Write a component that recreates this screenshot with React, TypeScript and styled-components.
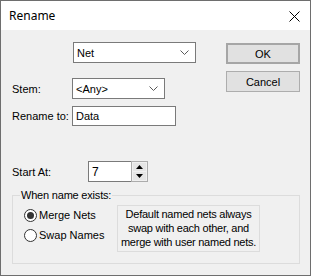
import React from "react";
import styled, { createGlobalStyle } from "styled-components";

const Global = createGlobalStyle`
  html, body { margin: 0; padding: 0; background: #ffffff; }
  * { box-sizing: border-box; }
`;

const Window = styled.div`
  width: 311px;
  height: 276px;
  border: 1px solid #6e6e6e;
  background: #f0f0f0;
  display: flex;
  flex-direction: column;
  font-family: "Liberation Sans", Arial, sans-serif;
  font-size: 11px;
  color: #000;
`;

const TitleBar = styled.div`
  height: 29px;
  background: #ffffff;
  display: flex;
  align-items: center;
  justify-content: space-between;
  padding: 0 10px 0 8px;
`;

const Title = styled.span`
  font-family: "Noto Sans", "Open Sans", sans-serif;
  font-size: 12px;
  color: #000;
`;

const CloseIcon = styled.svg`
  width: 11px;
  height: 11px;
  margin-top: 1px;
`;

const Body = styled.div`
  flex: 1;
  display: flex;
  flex-direction: column;
  padding: 12px 10px 0 11px;
`;

const TopSection = styled.div`
  display: flex;
  justify-content: space-between;
`;

const Form = styled.div`
  display: grid;
  grid-template-columns: 60px auto;
  align-items: center;
  justify-items: start;
`;

const Label = styled.span<{ $mt?: number }>`
  white-space: nowrap;
  margin-top: ${(p) => p.$mt ?? 0}px;
`;

const Field = styled.div<{ $w: number; $h: number; $mt?: number; $ml?: number }>`
  width: ${(p) => p.$w}px;
  height: ${(p) => p.$h}px;
  margin-top: ${(p) => p.$mt ?? 0}px;
  margin-left: ${(p) => p.$ml ?? 0}px;
  border: 1px solid #7a7a7a;
  background: #ffffff;
  display: flex;
  align-items: center;
  justify-content: space-between;
  padding: 0 6px 0 3px;
`;

const Spacer = styled.span``;

const Chevron = () => (
  <svg width="9" height="5" viewBox="0 0 9 5">
    <path d="M0.5 0.5 L4.5 4.5 L8.5 0.5" fill="none" stroke="#5a5a5a" strokeWidth="1" />
  </svg>
);

const ButtonColumn = styled.div`
  display: flex;
  flex-direction: column;
  gap: 7px;
  padding-top: 1px;
`;

const Button = styled.button<{ $default?: boolean }>`
  width: 74px;
  height: 21px;
  padding: 0;
  font-family: "Liberation Sans", Arial, sans-serif;
  font-size: 11px;
  color: #000;
  background: #e1e1e1;
  border: ${(p) => (p.$default ? "2px solid #a6a6a6" : "1px solid #adadad")};
`;

const StartRow = styled.div`
  display: flex;
  align-items: center;
  margin-top: 35px;
`;

const StartLabel = styled.span`
  width: 76px;
`;

const Spin = styled.div`
  display: flex;
  height: 21px;
`;

const SpinEdit = styled.div`
  width: 43px;
  height: 21px;
  border: 1px solid #7a7a7a;
  border-right: none;
  background: #fff;
  padding-left: 3px;
  display: flex;
  align-items: center;
  font-size: 12px;
`;

const SpinButtons = styled.div`
  width: 17px;
  height: 21px;
  border: 1px solid #acacac;
  background: #f0f0f0;
  display: flex;
  flex-direction: column;
  padding: 1px;
  gap: 1px;
`;

const SpinBtn = styled.div`
  flex: 1;
  background: #e5e5e5;
  display: flex;
  align-items: center;
  justify-content: center;
`;

const Group = styled.fieldset`
  margin: 7px 0 0 0;
  padding: 4px 0 11px 7px;
  border: 1px solid #dcdcdc;
  min-width: 0;
`;

const Legend = styled.legend`
  padding: 0 1px;
  line-height: 12px;
  font-size: 11px;
  letter-spacing: -0.2px;
`;

const GroupInner = styled.div`
  display: flex;
  padding-left: 4px;
`;

const RadioList = styled.div`
  width: 93px;
  display: flex;
  flex-direction: column;
  gap: 7px;
  padding-top: 4px;
`;

const RadioRow = styled.label`
  display: flex;
  align-items: center;
  gap: 2px;
  font-size: 11px;
  line-height: 13px;
  white-space: nowrap;
`;

const RadioCircle = styled.span<{ $checked?: boolean }>`
  width: 13px;
  height: 13px;
  border-radius: 50%;
  border: 1px solid #333333;
  background: #fff;
  display: flex;
  align-items: center;
  justify-content: center;
  &::after {
    content: "";
    width: 7px;
    height: 7px;
    border-radius: 50%;
    background: ${(p) => (p.$checked ? "#333333" : "transparent")};
  }
`;

const InfoBox = styled.div`
  width: 143px;
  height: 47px;
  border: 1px solid #dcdcdc;
  text-align: center;
  line-height: 14px;
  font-size: 11px;
  letter-spacing: -0.25px;
  white-space: nowrap;
  padding-top: 1px;
`;

const Arrow = ({ up }: { up?: boolean }) => (
  <svg width="7" height="4" viewBox="0 0 7 4">
    <path d={up ? "M3.5 0 L7 4 L0 4 Z" : "M0 0 L7 0 L3.5 4 Z"} fill="#000" />
  </svg>
);

export default function App() {
  return (
    <>
      <Global />
      <Window>
        <TitleBar>
          <Title>Rename</Title>
          <CloseIcon viewBox="0 0 11 11">
            <path d="M0.5 0.5 L10.5 10.5 M10.5 0.5 L0.5 10.5" stroke="#000" strokeWidth="1" />
          </CloseIcon>
        </TitleBar>
        <Body>
          <TopSection>
            <Form>
              <Spacer />
              <Field $w={123} $h={21} $ml={1}>
                <span>Net</span>
                <Chevron />
              </Field>
              <Label $mt={15}>Stem:</Label>
              <Field $w={93} $h={21} $mt={15}>
                <span>&lt;Any&gt;</span>
                <Chevron />
              </Field>
              <Label $mt={7}>Rename to:</Label>
              <Field $w={104} $h={20} $mt={7}>
                <span>Data</span>
              </Field>
            </Form>
            <ButtonColumn>
              <Button $default>OK</Button>
              <Button>Cancel</Button>
            </ButtonColumn>
          </TopSection>
          <StartRow>
            <StartLabel>Start At:</StartLabel>
            <Spin>
              <SpinEdit>7</SpinEdit>
              <SpinButtons>
                <SpinBtn>
                  <Arrow up />
                </SpinBtn>
                <SpinBtn>
                  <Arrow />
                </SpinBtn>
              </SpinButtons>
            </Spin>
          </StartRow>
          <Group>
            <Legend>When name exists:</Legend>
            <GroupInner>
              <RadioList>
                <RadioRow>
                  <RadioCircle $checked />
                  Merge Nets
                </RadioRow>
                <RadioRow>
                  <RadioCircle />
                  Swap Names
                </RadioRow>
              </RadioList>
              <InfoBox>
                Default named nets always
                <br />
                swap with each other, and
                <br />
                merge with user named nets.
              </InfoBox>
            </GroupInner>
          </Group>
        </Body>
      </Window>
    </>
  );
}
